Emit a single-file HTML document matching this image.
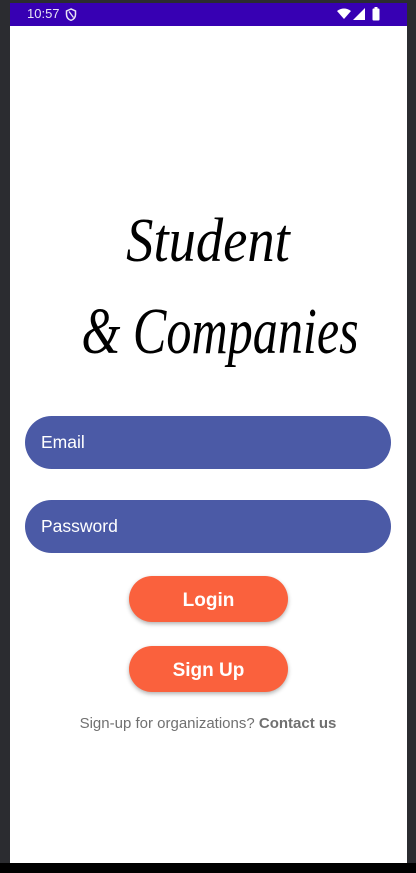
<!DOCTYPE html>
<html><head><meta charset="utf-8"><style>
html,body{margin:0;padding:0;width:416px;height:873px;overflow:hidden;background:#2b2c30;font-family:"Liberation Sans",sans-serif;}
.screen{position:absolute;left:10px;top:3px;width:397px;height:860px;background:#fff;overflow:hidden;}
.status{position:absolute;left:0;top:0;width:397px;height:23px;background:#3700b3;color:#e8e4f5;}
.time{position:absolute;left:17px;top:3px;font-size:13px;}
.nav{position:absolute;left:0;top:863px;width:416px;height:10px;background:#000;}
.title{position:absolute;left:0;width:416px;text-align:center;font-family:"Liberation Serif",serif;font-style:italic;color:#000;white-space:nowrap;}
.field{position:absolute;left:25px;width:366px;height:53px;border-radius:27px;background:#4b5aa6;color:#fff;font-size:17.5px;line-height:53px;box-sizing:border-box;padding-left:16px;}
.btn{position:absolute;left:129px;width:159px;height:46px;border-radius:23px;background:#fa613d;color:#fff;font-weight:bold;font-size:19px;text-align:center;line-height:49px;box-shadow:0 2px 4px rgba(0,0,0,.3);}
.foot{position:absolute;left:0;width:416px;top:715px;text-align:center;font-size:15px;color:#707070;}
</style></head><body>
<div class="screen">
 <div class="status">
  <span class="time">10:57</span>
  <svg style="position:absolute;left:55px;top:5px" width="12" height="13" viewBox="0 0 12 13"><path d="M6 1L1.5 3v3.5c0 3 2 5 4.5 5.8 2.5-.8 4.5-2.8 4.5-5.8V3z" fill="none" stroke="#e8e4f5" stroke-width="1.5"/><path d="M4 3.5l4.5 6" stroke="#e8e4f5" stroke-width="1.3"/></svg>
  <svg style="position:absolute;left:327px;top:5px" width="14" height="12" viewBox="0 0 14 12"><path d="M0 3Q7-2 14 3L7 11z" fill="#fff"/></svg>
  <svg style="position:absolute;left:343px;top:5px" width="12" height="12"><path d="M0 12L12 0V12z" fill="#fff"/></svg>
  <svg style="position:absolute;left:362px;top:4px" width="8" height="14"><rect x="2.5" y="0" width="3" height="2" fill="#fff"/><rect x="0.5" y="1.5" width="7" height="12" rx="1" fill="#fff"/></svg>
 </div>
</div>
<div class="title" style="top:206px;font-size:62px;transform:scaleX(.88)">Student</div>
<div class="title" style="left:12px;top:294px;font-size:66px;transform:scaleX(.76)">&amp; Companies</div>
<div class="field" style="top:416px">Email</div>
<div class="field" style="top:500px">Password</div>
<div class="btn" style="top:576px">Login</div>
<div class="btn" style="top:646px">Sign Up</div>
<div class="foot">Sign-up for organizations? <b>Contact us</b></div>
<div class="nav"></div>
</body></html>
